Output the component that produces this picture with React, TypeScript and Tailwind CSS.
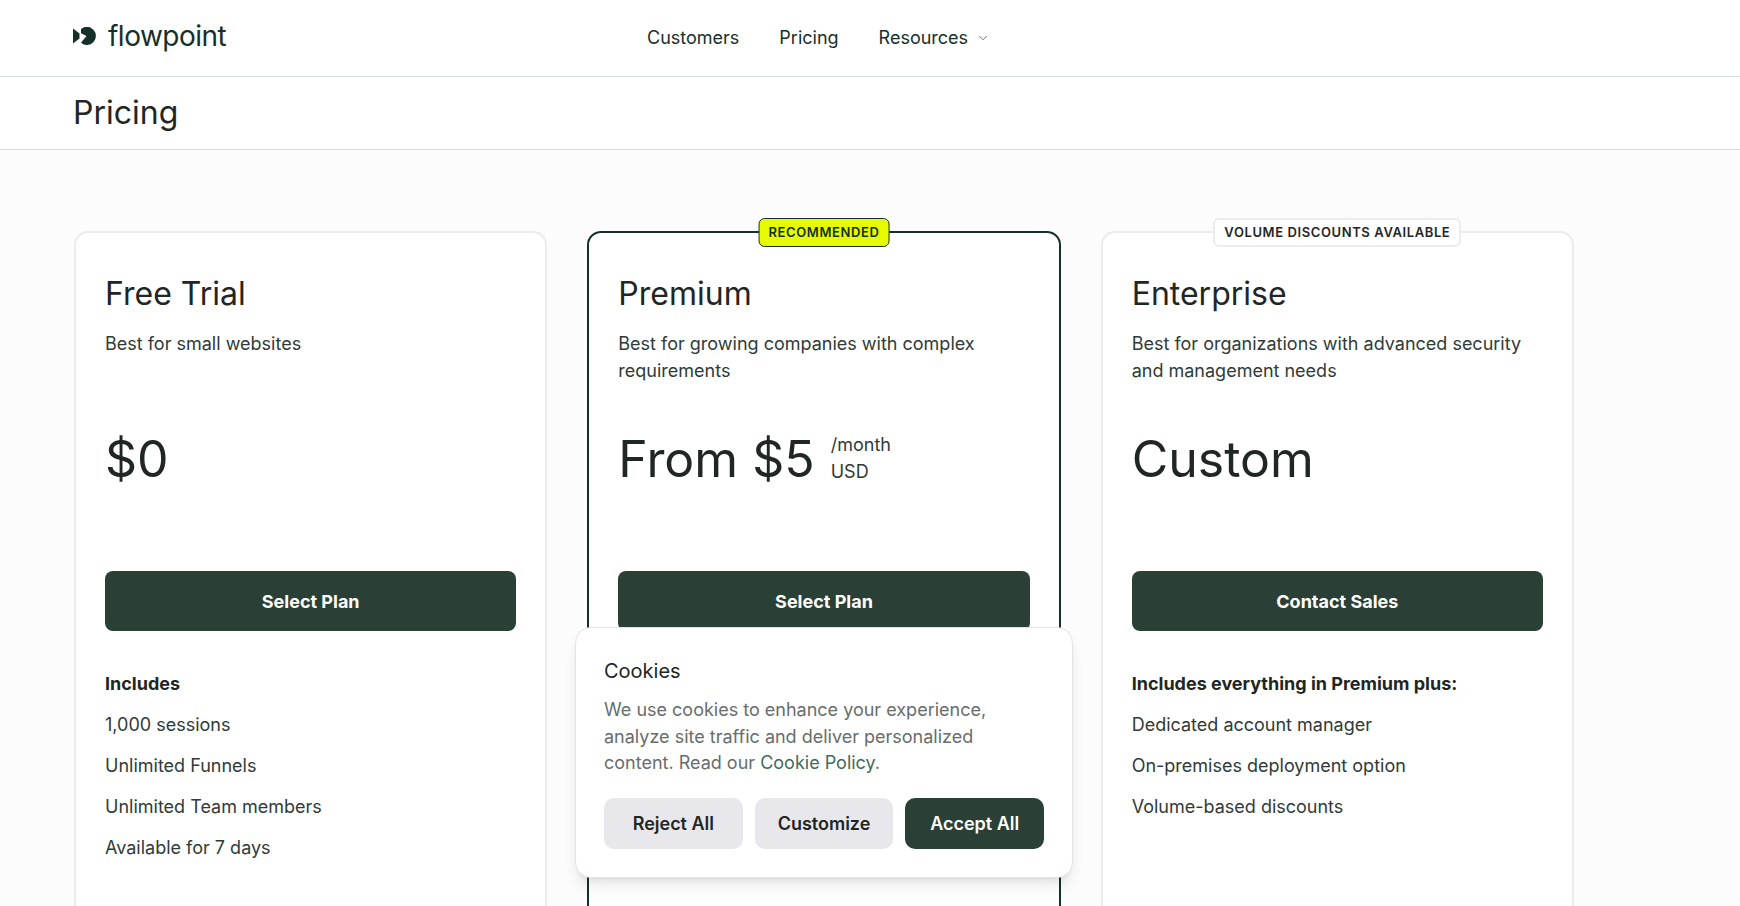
import { ChevronDown } from "lucide-react";

const plans = [
  {
    name: "Free Trial",
    desc: "Best for small websites",
    price: "$0",
    cta: "Select Plan",
    heading: "Includes",
    items: ["1,000 sessions", "Unlimited Funnels", "Unlimited Team members", "Available for 7 days"],
  },
  {
    name: "Premium",
    desc: "Best for growing companies with complex requirements",
    price: "From $5",
    unit: true,
    cta: "Select Plan",
    heading: "Includes everything in Free Trial plus:",
    items: ["Session-based pricing", "Unlimited Funnels", "Unlimited Team members", "Email support"],
    badge: "RECOMMENDED",
    featured: true,
  },
  {
    name: "Enterprise",
    desc: "Best for organizations with advanced security and management needs",
    price: "Custom",
    cta: "Contact Sales",
    heading: "Includes everything in Premium plus:",
    items: ["Dedicated account manager", "On-premises deployment option", "Volume-based discounts"],
    badge: "VOLUME DISCOUNTS AVAILABLE",
  },
];

function Logo() {
  return (
    <svg width="27" height="18" viewBox="0 0 27 18" className="block">
      <path d="M0 1.5 L6.5 6.5 V11.5 L0 16.5 Z" fill="#15302a" />
      <path
        d="M8 2.2 A9 9 0 1 1 8 15.8 L13.5 9 L8 6.2 Z"
        fill="#15302a"
      />
      <path d="M8.5 2 C10 0.8 12 0 14.5 0 L18 0 C13 2 10 4 8 5 Z" fill="#15302a" />
    </svg>
  );
}

const App = () => {
  return (
    <div className="relative h-[906px] overflow-hidden bg-[#fcfcfd] font-['Inter',sans-serif] text-[#1f2624]">
      {/* Header */}
      <header className="flex h-[77px] items-start border-b border-[#d9dcdc] bg-white pl-[73px]">
        <div className="flex w-[574px] items-center gap-[8px] pt-[19px]">
          <Logo />
          <span className="text-[28px] leading-[34px] tracking-[-0.5px] text-[#15302a]">flowpoint</span>
        </div>
        <nav className="flex items-center gap-[40px] pt-[25px] text-[18px] leading-[26px] text-[#15302a]">
          <a>Customers</a>
          <a>Pricing</a>
          <a className="flex items-center gap-[8px]">
            Resources
            <ChevronDown className="h-[14px] w-[14px] text-[#46605a]" strokeWidth={1.5} />
          </a>
        </nav>
      </header>

      <div className="flex h-[73px] items-center border-b border-[#d9dcdc] bg-white pl-[73px]">
        <h1 className="text-[32px] leading-[40px] text-[#1f2624]">Pricing</h1>
      </div>

      {/* Plans */}
      <main className="grid w-[1574px] grid-cols-3 gap-[40px] pl-[74px] pt-[81px]">
        {plans.map((plan) => (
          <section
            key={plan.name}
            className={
              plan.featured
                ? "relative h-[900px] rounded-[14px] border-2 border-[#15302a] bg-white px-[29px] pt-[41px]"
                : "relative h-[900px] rounded-[14px] border-2 border-[#ececee] bg-white px-[29px] pt-[41px]"
            }
          >
            {plan.badge && (
              <span
                className={
                  plan.featured
                    ? "absolute left-1/2 top-[-15px] -translate-x-1/2 whitespace-nowrap rounded-[6px] border border-[#15302a] bg-[#e6fb00] px-[9px] py-[5px] text-[13px] font-semibold leading-[17px] tracking-[0.6px] text-[#15302a]"
                    : "absolute left-1/2 top-[-15px] -translate-x-1/2 whitespace-nowrap rounded-[6px] border-2 border-[#ececee] bg-white px-[9px] py-[4px] text-[13px] font-semibold leading-[17px] tracking-[0.6px] text-[#1f2624]"
                }
              >
                {plan.badge}
              </span>
            )}
            <h2 className="text-[32px] leading-[40px]">{plan.name}</h2>
            <p className="mt-[17px] h-[53px] text-[18px] leading-[26.6px] text-[#2f3b38]">{plan.desc}</p>
            <div className="mt-[45px] flex h-[60px] items-center gap-[16px]">
              <span className="text-[50px] leading-[60px]">{plan.price}</span>
              {plan.unit && (
                <span className="text-[18px] leading-[26.6px] text-[#2f3b38]">
                  /month
                  <br />
                  USD
                </span>
              )}
            </div>
            <button className="mt-[82px] h-[60px] w-full rounded-[8px] bg-[#2a4036] text-[18px] font-bold text-white">
              {plan.cta}
            </button>
            <h3 className="mt-[40px] text-[18px] font-bold leading-[26.6px]">{plan.heading}</h3>
            <ul className="mt-[14.5px] flex flex-col gap-[14.5px] text-[18px] leading-[26.6px] text-[#2f3b38]">
              {plan.items.map((item) => (
                <li key={item}>{item}</li>
              ))}
            </ul>
          </section>
        ))}
      </main>

      {/* Cookie banner */}
      <div className="absolute left-[575px] top-[627px] w-[498px] rounded-[16px] border border-[#e3e4e6] bg-white p-[28px] shadow-lg">
        <h4 className="text-[20px] leading-[30px] text-[#1f2624]">Cookies</h4>
        <p className="mt-[11px] text-[18px] leading-[26.6px] text-[#676d6c]">
          We use cookies to enhance your experience, analyze site traffic and deliver personalized content. Read our{" "}
          <a className="text-[#3f6b5a]">Cookie Policy</a>.
        </p>
        <div className="mt-[21px] flex gap-[12px]">
          <button className="h-[51px] flex-1 rounded-[10px] bg-[#e8e8ec] text-[18px] font-semibold text-[#1f2624]">Reject All</button>
          <button className="h-[51px] flex-1 rounded-[10px] bg-[#e8e8ec] text-[18px] font-semibold text-[#1f2624]">Customize</button>
          <button className="h-[51px] flex-1 rounded-[10px] bg-[#2a4036] text-[18px] font-semibold text-white">Accept All</button>
        </div>
      </div>
    </div>
  );
};

export default App;
